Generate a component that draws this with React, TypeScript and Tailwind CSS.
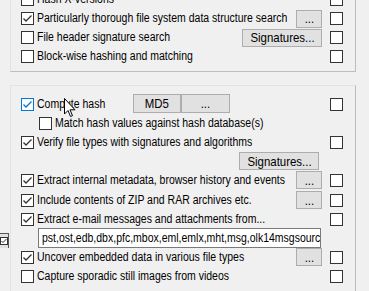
import React from "react";

const font = { fontFamily: '"Liberation Sans", Arial, sans-serif' };

function Txt({ children }: { children: React.ReactNode }) {
  return (
    <span className="inline-block origin-left scale-x-[0.84] whitespace-nowrap text-[12.5px] leading-none text-black">
      {children}
    </span>
  );
}

function Box({ checked = false, hot = false }: { checked?: boolean; hot?: boolean }) {
  return (
    <div
      className={
        "w-[13px] h-[13px] shrink-0 bg-white border flex items-center justify-center " +
        (hot ? "border-[#0078d7]" : "border-[#333333]")
      }
    >
      {checked && (
        <svg width="11" height="11" viewBox="0 0 11 11">
          <polyline
            points="1.5,5.5 4,8 9.5,2.5"
            fill="none"
            stroke={hot ? "#0078d7" : "#333333"}
            strokeWidth="1.3"
          />
        </svg>
      )}
    </div>
  );
}

function Btn({ label, w }: { label: string; w: string }) {
  return (
    <div
      className={
        "h-[18px] shrink-0 bg-[#e1e1e1] border border-[#adadad] flex items-center justify-center text-black " + w
      }
    >
      <span className="inline-block scale-x-[0.88] whitespace-nowrap text-[13px] leading-none">{label}</span>
    </div>
  );
}

function Row({
  h,
  label,
  checked = false,
  hot = false,
  right = true,
  button,
  indent = "",
}: {
  h: string;
  label: string;
  checked?: boolean;
  hot?: boolean;
  right?: boolean;
  button?: React.ReactNode;
  indent?: string;
}) {
  return (
    <div className={"flex items-center " + h}>
      <div className={"flex items-center flex-1 min-w-0 gap-[3px] " + indent}>
        <Box checked={checked} hot={hot} />
        <Txt>{label}</Txt>
      </div>
      {button}
      <div className="ml-[8px] w-[13px] shrink-0">{right && <Box />}</div>
    </div>
  );
}

export default function App() {
  return (
    <div className="relative w-[369px] h-[291px] overflow-hidden bg-[#f0f0f0]" style={font}>
      {/* top group */}
      <div className="-mt-[16px] ml-[10px] w-[346px] border border-t-[#e3e3e3] border-l-[#e3e3e3] border-r-[#bdbdbd] border-b-[#bdbdbd] pl-[10px] pr-[12px] pt-[5px] pb-[5px]">
        <Row h="h-[19px]" label="Hash X-versions" />
        <Row
          h="h-[19px]"
          label="Particularly thorough file system data structure search"
          checked
          button={<Btn label="..." w="w-[26px]" />}
        />
        <Row h="h-[19px]" label="File header signature search" button={<Btn label="Signatures..." w="w-[80px]" />} />
        <Row h="h-[19px]" label="Block-wise hashing and matching" />
      </div>

      {/* second group */}
      <div className="flex mt-[13px]">
        <div className="w-[10px] shrink-0 pt-[148px]">
          <div className="w-[9px] h-[15px] bg-[#e1e1e1] border-t border-r border-[#555555] flex items-center">
            <div className="w-[8px] h-[8px] bg-white border border-[#333333] flex items-center justify-center">
              <svg width="6" height="6" viewBox="0 0 6 6">
                <polyline points="0.5,3 2,4.5 5.5,1" fill="none" stroke="#333333" strokeWidth="1" />
              </svg>
            </div>
          </div>
        </div>
        <div className="w-[346px] border border-t-[#e3e3e3] border-l-[#e3e3e3] border-r-[#bdbdbd] border-b-[#bdbdbd] pl-[10px] pr-[12px] pt-[8px] pb-[8px]">
          <div className="flex items-center h-[20px]">
            <div className="flex items-center flex-1 min-w-0">
              <div className="flex items-center gap-[3px] w-[112px]">
                <Box checked hot />
                <Txt>Compute hash</Txt>
              </div>
              <div className="flex -mt-[1px]">
                <Btn label="MD5" w="w-[48px] h-[19px]" />
                <Btn label="..." w="w-[49px] h-[19px]" />
              </div>
            </div>
            <div className="ml-[8px] w-[13px] shrink-0">
              <Box />
            </div>
          </div>
          <Row
            h="h-[19px]"
            label="Match hash values against hash database(s)"
            indent="pl-[18px]"
            right={false}
          />
          <Row h="h-[19px]" label="Verify file types with signatures and algorithms" checked />
          <div className="flex items-start h-[18px]">
            <div className="flex-1 flex justify-end">
              <Btn label="Signatures..." w="w-[80px] h-[17px] mr-[3px]" />
            </div>
            <div className="ml-[8px] w-[13px] shrink-0" />
          </div>
          <Row
            h="h-[20px]"
            label="Extract internal metadata, browser history and events"
            checked
            button={<Btn label="..." w="w-[26px]" />}
          />
          <Row
            h="h-[20px]"
            label="Include contents of ZIP and RAR archives etc."
            checked
            button={<Btn label="..." w="w-[26px]" />}
          />
          <Row h="h-[18px]" label="Extract e-mail messages and attachments from..." checked />
          <div className="flex items-center h-[20px]">
            <div className="flex-1 min-w-0 ml-[17px] h-[20px] bg-white border border-[#7a7a7a] overflow-hidden flex items-center pl-[3px]">
              <Txt>pst,ost,edb,dbx,pfc,mbox,eml,emlx,mht,msg,olk14msgsource</Txt>
            </div>
            <div className="ml-[9px] w-[13px] shrink-0" />
          </div>
          <Row
            h="h-[18px]"
            label="Uncover embedded data in various file types"
            checked
            button={<Btn label="..." w="w-[26px]" />}
          />
          <Row h="h-[20px]" label="Capture sporadic still images from videos" />
        </div>
      </div>

      {/* mouse cursor */}
      <svg className="absolute left-[64px] top-[98px]" width="13" height="20" viewBox="0 0 13 20">
        <path
          d="M0.5 0.5 L0.5 16 L4 12.5 L6.5 18.5 L8.5 17.7 L6 11.8 L11 11.8 Z"
          fill="white"
          stroke="black"
          strokeWidth="1"
          strokeLinejoin="miter"
        />
      </svg>
    </div>
  );
}
